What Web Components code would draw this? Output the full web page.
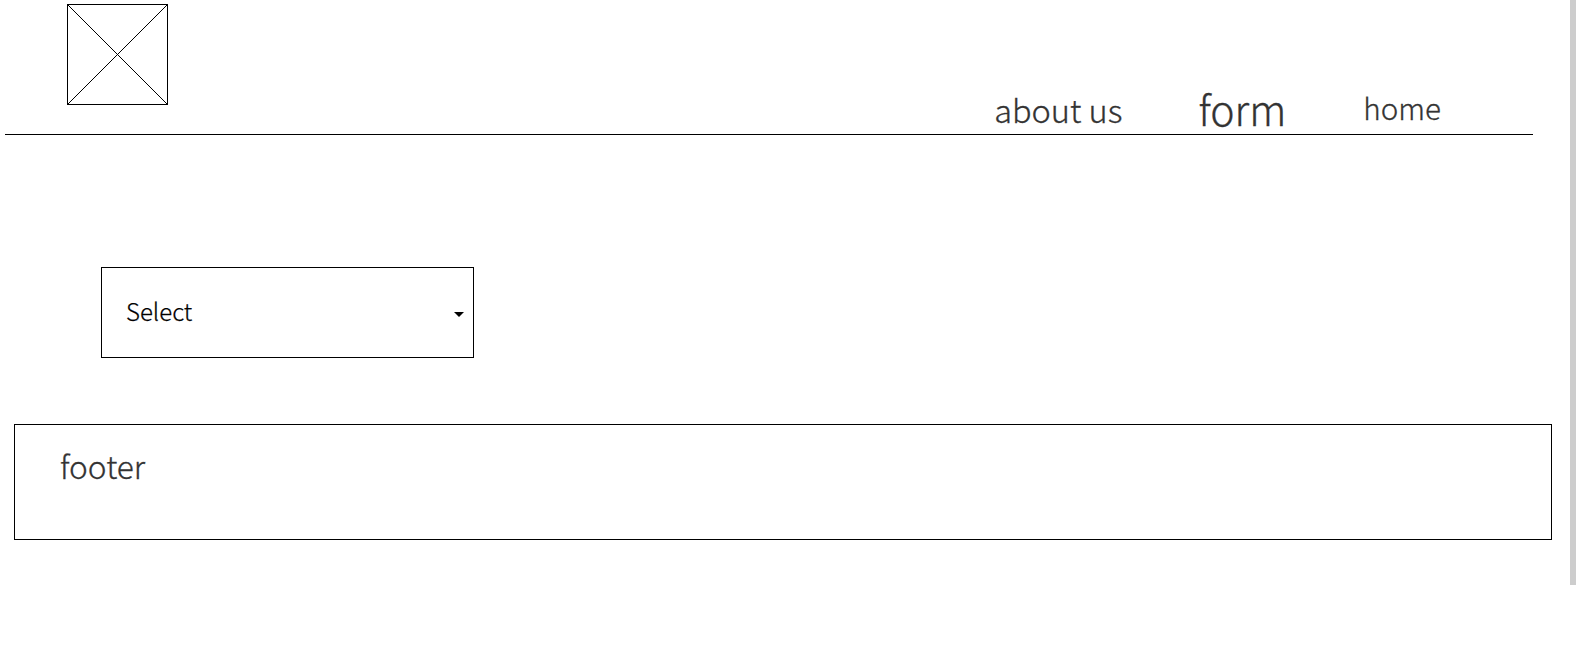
<!DOCTYPE html>
<html>
<head>
<meta charset="utf-8">
<style>
html,body{margin:0;padding:0;background:#fff;}
body{font-family:"Noto Sans CJK JP","Noto Sans",sans-serif;height:648px;overflow:hidden;}
</style>
</head>
<body>
<app-page>
    <site-header>
        <nav-link slot="nav" size="32.5" gap="76" drop="6">about us</nav-link>
        <nav-link slot="nav" size="41" gap="77" drop="1">form</nav-link>
        <nav-link slot="nav" size="29.6" drop="9">home</nav-link>
    </site-header>
    <select-box>Select</select-box>
    <site-footer>footer</site-footer>
</app-page>
<script>
class AppPage extends HTMLElement {
    constructor() {
        super();
        this.attachShadow({ mode: 'open' });
        this.shadowRoot.innerHTML = `
            <style>
                :host{display:block;width:1576px;height:648px;position:relative;overflow:hidden;}
                .scroll{position:absolute;right:0;top:0;width:6px;height:585px;background:#cdcdcd;}
            </style>
            <slot></slot>
            <div class="scroll"></div>
        `;
    }
}
class SiteHeader extends HTMLElement {
    constructor() {
        super();
        this.attachShadow({ mode: 'open' });
        this.shadowRoot.innerHTML = `
            <style>
                :host{display:flex;justify-content:space-between;align-items:flex-end;box-sizing:border-box;width:1528px;height:135px;margin-left:5px;padding:4px 92px 0 62px;border-bottom:1px solid #000;}
                svg{display:block;align-self:flex-start;}
                .nav{display:flex;align-items:flex-end;}
            </style>
            <svg width="101" height="101" viewBox="0 0 101 101" fill="none" stroke="#000">
                <rect x=".5" y=".5" width="100" height="100"/>
                <path d="M.5 .5L100.5 100.5M100.5 .5L.5 100.5"/>
            </svg>
            <div class="nav"><slot name="nav"></slot></div>
        `;
    }
}
class NavLink extends HTMLElement {
    constructor() {
        super();
        this.attachShadow({ mode: 'open' });
    }
    connectedCallback() {
        this.shadowRoot.innerHTML = `
            <style>
                :host{display:block;color:#333;font-weight:300;-webkit-text-stroke:.3px;line-height:1.2;font-size:${this.getAttribute('size')}px;margin-right:${this.getAttribute('gap') || 0}px;margin-bottom:${this.getAttribute('drop') || 0}px;}
            </style>
            <slot></slot>
        `;
    }
}
class SelectBox extends HTMLElement {
    constructor() {
        super();
        this.attachShadow({ mode: 'open' });
        this.shadowRoot.innerHTML = `
            <style>
                :host{display:flex;align-items:center;justify-content:space-between;box-sizing:border-box;width:373px;height:91px;margin:132px 0 0 101px;padding:0 9px 4px 24px;border:1px solid #000;font-size:24px;font-weight:300;-webkit-text-stroke:.25px;color:#000;}
                i{display:block;width:0;height:0;border:5px solid transparent;border-top-color:#000;border-bottom:0;margin-top:7px;}
            </style>
            <slot></slot>
            <i></i>
        `;
    }
}
class SiteFooter extends HTMLElement {
    constructor() {
        super();
        this.attachShadow({ mode: 'open' });
        this.shadowRoot.innerHTML = `
            <style>
                :host{display:block;box-sizing:border-box;width:1538px;height:116px;margin:66px 0 0 14px;padding:18px 45px 0;border:1px solid #000;font-size:31.6px;font-weight:300;-webkit-text-stroke:.3px;line-height:44px;color:#333;}
            </style>
            <slot></slot>
        `;
    }
}
customElements.define('app-page', AppPage);
customElements.define('site-header', SiteHeader);
customElements.define('nav-link', NavLink);
customElements.define('select-box', SelectBox);
customElements.define('site-footer', SiteFooter);
</script>
</body>
</html>
